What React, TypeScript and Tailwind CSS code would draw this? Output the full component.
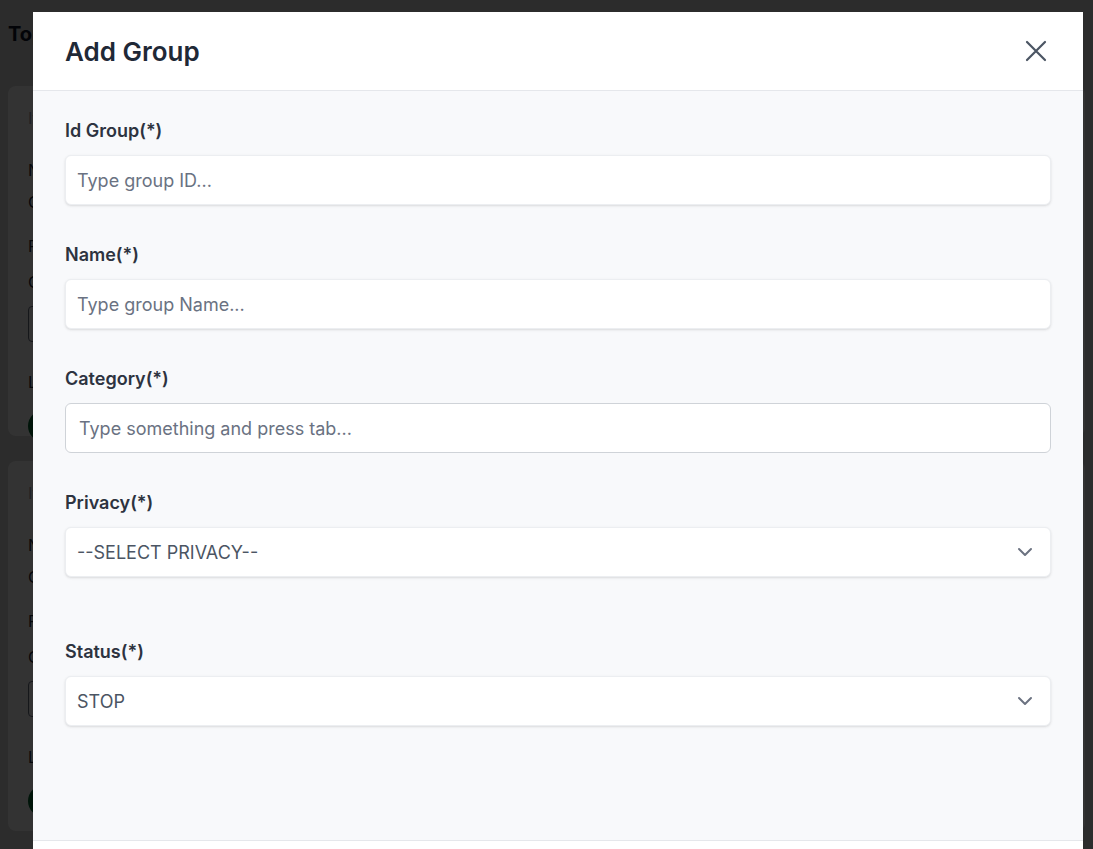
import React from "react";

const fields = [
  { label: "Id Group(*)", placeholder: "Type group ID...", kind: "input" },
  { label: "Name(*)", placeholder: "Type group Name...", kind: "input" },
  { label: "Category(*)", placeholder: "Type something and press tab...", kind: "tags" },
  { label: "Privacy(*)", value: "--SELECT PRIVACY--", kind: "select" },
  { label: "Status(*)", value: "STOP", kind: "select" },
];

function Chevron() {
  return (
    <svg width="16" height="10" viewBox="0 0 16 10" fill="none" className="shrink-0">
      <path d="M2 2l6 6 6-6" stroke="#6b7280" strokeWidth="2" strokeLinecap="round" strokeLinejoin="round" />
    </svg>
  );
}

function CloseIcon() {
  return (
    <svg width="22" height="22" viewBox="0 0 22 22" fill="none">
      <path d="M2 2l18 18M20 2L2 20" stroke="#4b5563" strokeWidth="2.2" strokeLinecap="round" />
    </svg>
  );
}

function BackgroundCard({ className }: { className: string }) {
  return (
    <div className={"rounded-lg bg-white px-5 pt-5 text-base text-gray-800 " + className}>
      <div className="mb-7 text-gray-400">Item</div>
      <div className="mb-2">Name</div>
      <div className="mb-5">Content</div>
      <div className="mb-3">Privacy</div>
      <div className="mb-3">Category</div>
      <div className="mb-7 h-9 w-60 rounded border border-gray-500"></div>
      <div className="mb-4">Leader</div>
      <div className="h-8 w-8 rounded-full bg-green-800"></div>
    </div>
  );
}

export default function App() {
  return (
    <div className="relative h-[849px] overflow-hidden bg-[#d9d9d9]" style={{ fontFamily: "Inter, 'Noto Sans', sans-serif" }}>
      {/* page behind the modal */}
      <div className="px-2 pt-5">
        <h1 className="mb-[38px] text-xl font-bold text-gray-900">Topics</h1>
        <div className="flex flex-col gap-[25px]">
          <BackgroundCard className="h-[350px]" />
          <BackgroundCard className="h-[370px]" />
        </div>
      </div>

      {/* overlay + modal */}
      <div className="absolute inset-0 bg-black/80">
        <div className="ml-[33px] mt-[12px] w-[1050px] bg-white">
          <div className="flex h-[79px] items-center justify-between border-b border-gray-200 px-8">
            <h2 className="text-[26px] font-semibold text-[#1f2937]">Add Group</h2>
            <button className="-mr-[1px] flex h-8 w-8 items-center justify-center">
              <CloseIcon />
            </button>
          </div>
          <div className="h-[749px] bg-[#f8f9fb] px-8 pt-[28px]">
            {fields.map((f, i) => (
              <div key={f.label} className={i === 3 ? "mb-[63px]" : "mb-[38px]"}>
                <label className="mb-3 block text-[18px] leading-6 font-semibold text-[#2d3340]">{f.label}</label>
                {f.kind === "input" && (
                  <div className="flex h-[50px] items-center rounded-md border border-[#eceef1] bg-white px-[11px] shadow-sm">
                    <span className="text-[18px] text-gray-500">{f.placeholder}</span>
                  </div>
                )}
                {f.kind === "tags" && (
                  <div className="flex h-[50px] items-center rounded-md border border-[#cfd3d8] bg-white px-[13px]">
                    <span className="text-[18px] text-gray-500">{f.placeholder}</span>
                  </div>
                )}
                {f.kind === "select" && (
                  <div className="flex h-[50px] items-center justify-between rounded-md border border-[#eceef1] bg-white pr-[17px] pl-[11px] shadow-sm">
                    <span className="text-[18px] text-[#4b5563]">{f.value}</span>
                    <Chevron />
                  </div>
                )}
              </div>
            ))}
          </div>
          <div className="h-[40px] border-t border-gray-200 bg-white"></div>
        </div>
      </div>
    </div>
  );
}
